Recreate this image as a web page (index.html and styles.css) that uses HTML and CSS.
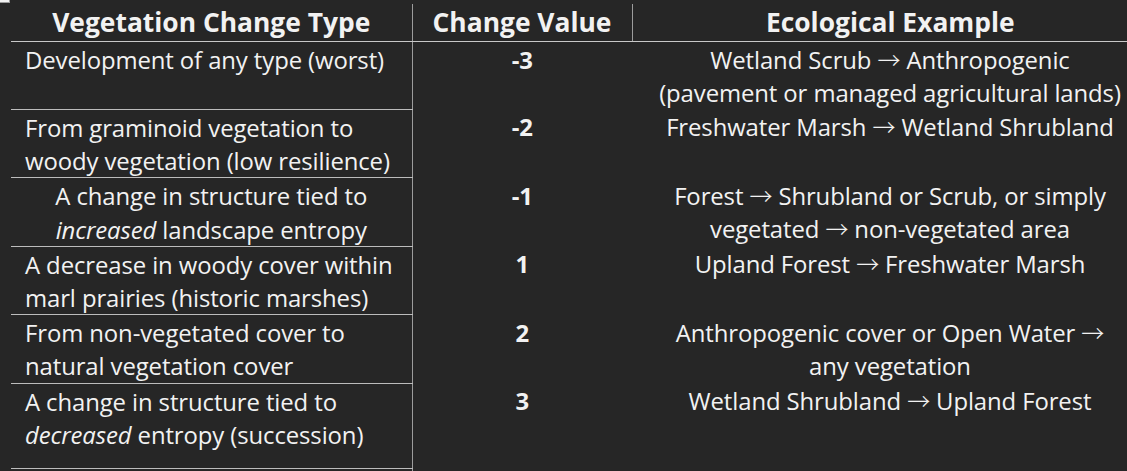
FILE: index.html
```html
<!DOCTYPE html>
<html lang="en">
<head>
<meta charset="utf-8">
<title>Vegetation Change Types</title>
<link rel="stylesheet" href="styles.css">
</head>
<body>
<div class="corner"></div>
<table class="veg">
  <colgroup>
    <col class="col-type">
    <col class="col-val">
    <col class="col-eco">
  </colgroup>
  <thead>
    <tr>
      <th class="h-type">Vegetation Change Type</th>
      <th class="h-val">Change Value</th>
      <th class="h-eco">Ecological Example</th>
    </tr>
  </thead>
  <tbody>
    <tr>
      <td class="type">Development of any type (worst)</td>
      <td class="val">-3</td>
      <td class="eco">Wetland Scrub <span class="arr">→</span> Anthropogenic<br>(pavement or managed agricultural lands)</td>
    </tr>
    <tr>
      <td class="type">From graminoid vegetation to<br>woody vegetation (low resilience)</td>
      <td class="val">-2</td>
      <td class="eco">Freshwater Marsh <span class="arr">→</span> Wetland Shrubland</td>
    </tr>
    <tr>
      <td class="type centered">A change in structure tied to<br><em>increased</em> landscape entropy</td>
      <td class="val">-1</td>
      <td class="eco">Forest <span class="arr">→</span> Shrubland or Scrub, or simply<br>vegetated <span class="arr">→</span> non-vegetated area</td>
    </tr>
    <tr>
      <td class="type">A decrease in woody cover within<br>marl prairies (historic marshes)</td>
      <td class="val">1</td>
      <td class="eco">Upland Forest <span class="arr">→</span> Freshwater Marsh</td>
    </tr>
    <tr>
      <td class="type">From non-vegetated cover to<br>natural vegetation cover</td>
      <td class="val">2</td>
      <td class="eco">Anthropogenic cover or Open Water <span class="arr">→</span><br>any vegetation</td>
    </tr>
    <tr class="last">
      <td class="type">A change in structure tied to<br><em>decreased</em> entropy (succession)</td>
      <td class="val">3</td>
      <td class="eco">Wetland Shrubland <span class="arr">→</span> Upland Forest</td>
    </tr>
    <tr class="tail">
      <td class="tail-type"></td>
      <td></td>
      <td></td>
    </tr>
  </tbody>
</table>
</body>
</html>
```

FILE: styles.css
```css
html, body {
  margin: 0;
  padding: 0;
  overflow: hidden;
  background: #262626;
}

body {
  position: relative;
  width: 1127px;
  height: 471px;
  color: #f2f2f2;
  font-family: "Open Sans", "Noto Sans", sans-serif;
}

.corner {
  position: absolute;
  left: 0;
  top: 0;
  width: 9px;
  height: 2px;
  background: #f0f0f0;
  border-right: 1px solid #9a9a9a;
  border-bottom: 1px solid #9a9a9a;
}

.veg {
  border-collapse: collapse;
  table-layout: fixed;
  width: 1137px;
  margin: 4px 0 0 11px;
}

.col-type { width: 401px; }
.col-val { width: 220px; }
.col-eco { width: 516px; }

.veg th {
  height: 37px;
  padding: 0;
  font-size: 26.4px;
  line-height: 36px;
  font-weight: 700;
  text-align: center;
  vertical-align: top;
  border-bottom: 1px solid #c8c8c8;
}

.h-type,
.h-val {
  border-right: 1px solid #9c9c9c;
}

.veg td {
  padding: 1px 0 0;
  font-size: 23.9px;
  line-height: 33.2px;
  vertical-align: top;
  letter-spacing: -0.1px;
  white-space: nowrap;
}

.veg td.type {
  padding-left: 14px;
  text-align: left;
  border-bottom: 1px solid #bcbcbc;
  border-right: 1px solid #9c9c9c;
}

.veg td.type.centered {
  padding-left: 0;
  text-align: center;
}

.veg td.val {
  text-align: center;
  font-weight: 700;
}

.veg td.eco {
  text-align: center;
}

.arr {
  font-family: "Noto Sans CJK JP", "DejaVu Sans", sans-serif;
  font-size: 0.96em;
  font-weight: 300;
  line-height: 0;
}

.veg tr.last td {
  padding-bottom: 17px;
}

.veg tr.tail td {
  height: 10px;
  padding: 0;
}

.veg td.tail-type {
  border-right: 1px solid #9c9c9c;
}
```
